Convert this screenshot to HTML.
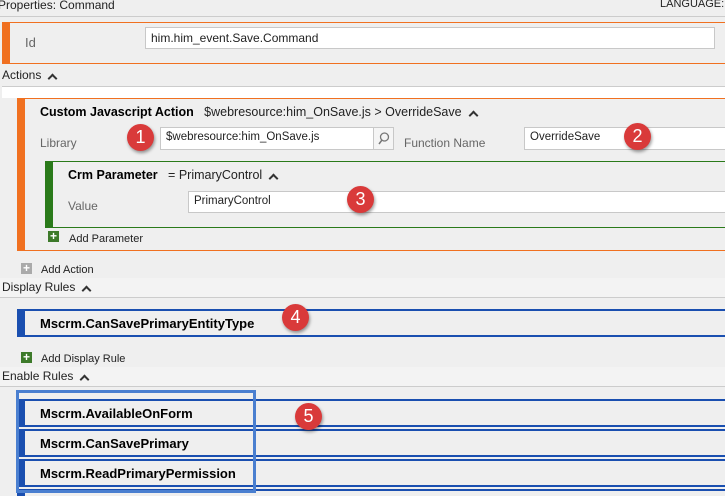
<!DOCTYPE html>
<html><head><style>
*{margin:0;padding:0;box-sizing:border-box}
html{width:725px;height:496px;overflow:hidden}
body{width:725px;height:496px;background:#efefef;position:relative;overflow:hidden;font-family:"Liberation Sans",sans-serif;font-size:12px;color:#222}
.a{position:absolute;white-space:nowrap}
.lbl{color:#666}
.b{font-weight:bold;color:#000}
.inp{position:absolute;background:#fff;border:1px solid #c8c8c8;padding:3px 5px;font-size:11.5px;color:#222}
.badge{position:absolute;width:27px;height:27px;border-radius:50%;background:#d93a3a;color:#fff;font-size:18px;text-align:center;line-height:27px;box-shadow:1px 2px 3px rgba(0,0,0,.4)}
.chev{display:inline-block;width:7px;height:7px;border-left:2px solid #333;border-top:2px solid #333;transform:rotate(45deg);margin-left:8px;position:relative;top:3px}
.plus{position:absolute;width:11px;height:11px;color:#fff;font-size:12px;line-height:10px;text-align:center;font-weight:bold}
.rule{position:absolute;left:17px;right:0;height:28px;border-top:2px solid #1a4fb0;border-bottom:2px solid #1a4fb0;background:#efefef}
.rule:before{content:"";position:absolute;left:0;top:-2px;bottom:-2px;width:8px;background:#1a4fb0}
.rule span{position:absolute;left:23px;top:5px;font-weight:bold;font-size:13px;color:#000}
</style></head><body>
<div class="a" style="left:-2px;top:-2px;font-size:12px">Properties: Command</div>
<div class="a" style="left:660px;top:-2px;font-size:11px">LANGUAGE:</div>
<div class="a" style="left:0;right:0;top:16px;height:1px;background:#ccc"></div>

<div class="a" style="left:2px;right:0;top:22px;height:42px;border-top:1px solid #f07020;border-bottom:1px solid #f07020;border-left:8px solid #f07020"></div>
<div class="a lbl" style="left:25px;top:35px;font-size:13px">Id</div>
<div class="inp" style="left:145px;top:27px;width:570px;height:22px;font-size:12px">him.him_event.Save.Command</div>

<div class="a" style="left:2px;top:68px;font-size:12px">Actions<span class="chev"></span></div>
<div class="a" style="left:2px;right:0;top:86px;height:1px;background:#ccc"></div>
<div class="a" style="left:2px;right:0;top:87px;height:11px;background:#fff"></div>

<div class="a" style="left:17px;right:0;top:98px;height:153px;border-top:1px solid #f07020;border-bottom:1px solid #f07020;border-left:8px solid #f07020"></div>
<div class="a" style="left:40px;top:105px;font-size:12.5px"><span class="b">Custom Javascript Action</span>&nbsp;&nbsp; $webresource:him_OnSave.js &gt; OverrideSave<span class="chev"></span></div>
<div class="a lbl" style="left:40px;top:136px">Library</div>
<div class="inp" style="left:160px;top:127px;width:214px;height:23px">$webresource:him_OnSave.js</div>
<div class="a" style="left:373px;top:127px;width:21px;height:23px;border:1px solid #c8c8c8;background:#f5f5f5"><svg width="19" height="21"><circle cx="10.5" cy="9" r="4" fill="none" stroke="#777" stroke-width="1.3"/><line x1="8" y1="12" x2="5" y2="16" stroke="#777" stroke-width="1.5"/></svg></div>
<div class="a lbl" style="left:404px;top:136px">Function Name</div>
<div class="inp" style="left:524px;top:127px;width:210px;height:23px">OverrideSave</div>
<div class="badge" style="left:127px;top:124px">1</div>
<div class="badge" style="left:624px;top:123px">2</div>

<div class="a" style="left:45px;right:0;top:161px;height:67px;border-top:1px solid #2a7a1a;border-bottom:1px solid #2a7a1a;border-left:8px solid #2a7a1a"></div>
<div class="a" style="left:68px;top:168px;font-size:12.5px"><span class="b">Crm Parameter</span>&nbsp;&nbsp; = PrimaryControl<span class="chev"></span></div>
<div class="a lbl" style="left:68px;top:199px">Value</div>
<div class="inp" style="left:188px;top:191px;width:545px;height:22px">PrimaryControl</div>
<div class="badge" style="left:347px;top:186px">3</div>
<div class="plus" style="left:48px;top:231px;background:#3d7a2a">+</div>
<div class="a" style="left:69px;top:233px;font-size:11px">Add Parameter</div>

<div class="plus" style="left:21px;top:263px;background:#aaa">+</div>
<div class="a" style="left:41px;top:264px;font-size:11px">Add Action</div>

<div class="a" style="left:0;right:0;top:278px;height:20px;background:#f3f3f3;border-bottom:1px solid #ccc"></div>
<div class="a" style="left:2px;top:280px">Display Rules<span class="chev"></span></div>
<div class="rule" style="top:309px"><span>Mscrm.CanSavePrimaryEntityType</span></div>
<div class="badge" style="left:282px;top:304px">4</div>

<div class="plus" style="left:21px;top:352px;background:#3d7a2a">+</div>
<div class="a" style="left:41px;top:353px;font-size:11px">Add Display Rule</div>

<div class="a" style="left:0;right:0;top:367px;height:20px;background:#f3f3f3;border-bottom:1px solid #ccc"></div>
<div class="a" style="left:2px;top:369px">Enable Rules<span class="chev"></span></div>
<div class="rule" style="top:399px"><span>Mscrm.AvailableOnForm</span></div>
<div class="rule" style="top:429px"><span>Mscrm.CanSavePrimary</span></div>
<div class="rule" style="top:459px"><span>Mscrm.ReadPrimaryPermission</span></div>
<div class="a" style="left:17px;right:0;top:489px;height:2px;background:#1a4fb0"></div>
<div class="a" style="left:17px;width:8px;top:489px;height:7px;background:#1a4fb0"></div>
<div class="a" style="left:16px;top:390px;width:240px;height:103px;border:3px solid #4a7fd0"></div>
<div class="badge" style="left:295px;top:403px">5</div>
</body></html>
